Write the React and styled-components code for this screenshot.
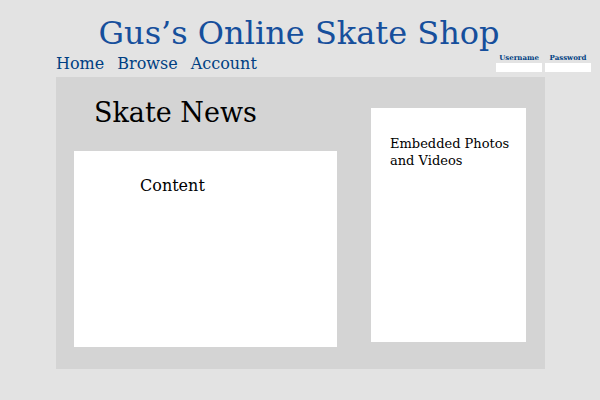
import React from 'react';
import styled, { createGlobalStyle } from 'styled-components';

const GlobalStyle = createGlobalStyle`
  * { box-sizing: border-box; }
  body {
    margin: 0;
    background: #e3e3e3;
    color: #000;
    font-family: Rockwell, "Rockwell MT", "DejaVu Serif", serif;
  }
`;

const Page = styled.div`
  min-height: 100vh;
  padding-top: 13px;
`;

const Title = styled.h1`
  margin: 0;
  padding-right: 2px;
  color: #164f9c;
  font-size: 32px;
  line-height: 40px;
  font-weight: 400;
  text-align: center;
`;

const Bar = styled.div`
  display: flex;
  justify-content: space-between;
  min-height: 24px;
  padding: 0 9px 0 56px;
`;

const Nav = styled.nav`
  display: flex;
  gap: 13px;
`;

const NavLink = styled.a`
  color: #003f82;
  font-size: 16px;
  line-height: 22px;
  text-decoration: none;
`;

const Login = styled.form`
  display: flex;
  gap: 3px;
`;

const Field = styled.label`
  display: flex;
  flex-direction: column;
  width: 46px;
  color: #003f82;
  font-size: 7px;
  line-height: 10px;
  font-weight: 700;
  text-align: center;
`;

const Input = styled.input`
  width: 100%;
  height: 9px;
  padding: 0 2px;
  border: 0;
  background: #fff;
  font: inherit;
`;

const Main = styled.main`
  display: grid;
  grid-template-columns: 263fr 155fr;
  gap: 34px;
  margin: 0 55px 0 56px;
  padding: 16px 19px 22px 18px;
  background: #d4d4d4;
`;

const Heading = styled.h2`
  margin: 0 0 18px 20px;
  font-size: 27px;
  line-height: 40px;
  font-weight: 400;
`;

const Panel = styled.section`
  min-height: 196px;
  padding: 24px 66px;
  background: #fff;
`;

const PanelTitle = styled.h3`
  margin: 0;
  font-size: 16px;
  line-height: 22px;
  font-weight: 400;
`;

const Media = styled.aside`
  min-height: 234px;
  margin: 15px 0 5px;
  padding: 27px 10px 27px 19px;
  background: #fff;
  font-size: 13px;
  line-height: 17px;
`;

export default function App() {
  return (
    <Page>
      <GlobalStyle />
      <Title>Gus’s Online Skate Shop</Title>
      <Bar>
        <Nav>
          <NavLink href="#home">Home</NavLink>
          <NavLink href="#browse">Browse</NavLink>
          <NavLink href="#account">Account</NavLink>
        </Nav>
        <Login>
          <Field>Username<Input type="text" /></Field>
          <Field>Password<Input type="password" /></Field>
        </Login>
      </Bar>
      <Main>
        <div>
          <Heading>Skate News</Heading>
          <Panel><PanelTitle>Content</PanelTitle></Panel>
        </div>
        <Media>Embedded Photos<br />and Videos</Media>
      </Main>
    </Page>
  );
}
